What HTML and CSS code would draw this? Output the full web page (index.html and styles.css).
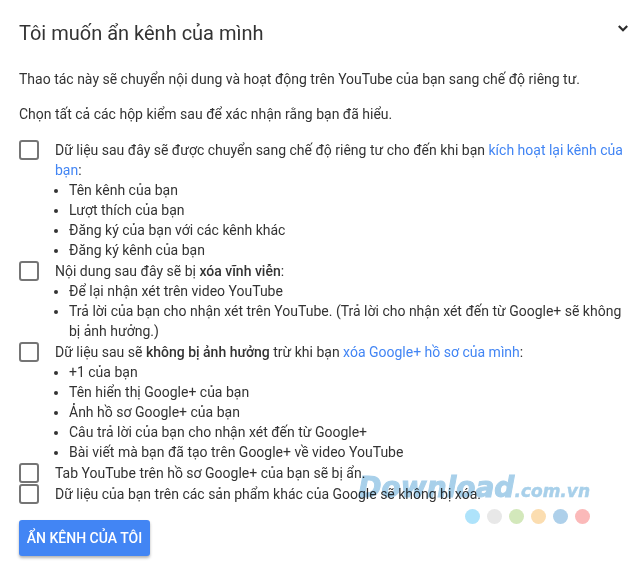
FILE: index.html
```html
<!DOCTYPE html>
<html lang="vi">
<head>
<meta charset="utf-8">
<title>Tôi muốn ẩn kênh của mình</title>
<link rel="stylesheet" href="styles.css">
</head>
<body>
<main class="panel">
  <header class="head">
    <h1 class="title">Tôi muốn ẩn kênh của mình</h1>
    <svg class="chevron" viewBox="0 0 10 7" width="10" height="7"><path d="M.8 1 5 5.2 9.2 1" fill="none" stroke="#2b2b2b" stroke-width="2.2"/></svg>
  </header>
  <p class="para">Thao tác này sẽ chuyển nội dung và hoạt động trên YouTube của bạn sang chế độ riêng tư.</p>
  <p class="para second">Chọn tất cả các hộp kiểm sau để xác nhận rằng bạn đã hiểu.</p>
  <div class="checks">
    <div class="row">
      <span class="box"></span>
      <div class="body">
        <div>Dữ liệu sau đây sẽ được chuyển sang chế độ riêng tư cho đến khi bạn <a class="link">kích hoạt lại kênh của bạn</a>:</div>
        <ul class="list">
          <li>Tên kênh của bạn</li>
          <li>Lượt thích của bạn</li>
          <li>Đăng ký của bạn với các kênh khác</li>
          <li>Đăng ký kênh của bạn</li>
        </ul>
      </div>
    </div>
    <div class="row">
      <span class="box"></span>
      <div class="body">
        <div>Nội dung sau đây sẽ bị <b>xóa vĩnh viễn</b>:</div>
        <ul class="list">
          <li>Để lại nhận xét trên video YouTube</li>
          <li>Trả lời của bạn cho nhận xét trên YouTube. (Trả lời cho nhận xét đến từ Google+ sẽ không bị ảnh hưởng.)</li>
        </ul>
      </div>
    </div>
    <div class="row">
      <span class="box"></span>
      <div class="body">
        <div>Dữ liệu sau sẽ <b>không bị ảnh hưởng</b> trừ khi bạn <a class="link">xóa Google+ hồ sơ của mình</a>:</div>
        <ul class="list">
          <li>+1 của bạn</li>
          <li>Tên hiển thị Google+ của bạn</li>
          <li>Ảnh hồ sơ Google+ của bạn</li>
          <li>Câu trả lời của bạn cho nhận xét đến từ Google+</li>
          <li>Bài viết mà bạn đã tạo trên Google+ về video YouTube</li>
        </ul>
      </div>
    </div>
    <div class="row">
      <span class="box"></span>
      <div class="body">Tab YouTube trên hồ sơ Google+ của bạn sẽ bị ẩn.</div>
    </div>
    <div class="row">
      <span class="box"></span>
      <div class="body">Dữ liệu của bạn trên các sản phẩm khác của Google sẽ không bị xóa.</div>
    </div>
  </div>
  <button class="btn" type="button">ẨN KÊNH CỦA TÔI</button>
</main>
<div class="mark">
  <div class="mark-text"><span class="mark-big">Download</span>.com.vn</div>
  <div class="dots">
    <i class="dot d1"></i><i class="dot d2"></i><i class="dot d3"></i><i class="dot d4"></i><i class="dot d5"></i><i class="dot d6"></i>
  </div>
</div>
</body>
</html>
```
FILE: styles.css
```css
* { box-sizing: border-box; }
html { background: #fff; }
html, body { margin: 0; height: 100%; overflow: hidden; }
body { font: 14px/20px Roboto, "Liberation Sans", sans-serif; color: #333; }
.panel { position: relative; padding: 20px 11px 0 19px; }
.head { display: flex; justify-content: space-between; align-items: flex-start; height: 49px; }
.title { margin: 0; font-size: 20px; font-weight: 400; line-height: 26px; color: #333; }
.chevron { margin-top: 5px; }
.para { margin: 0; }
.second { margin-top: 15px; }
.checks { margin-top: 16px; display: flex; flex-direction: column; }
.row { display: flex; margin-bottom: 1px; }
.box { flex: none; width: 20px; height: 20px; border: 2px solid #757575; border-radius: 3px; }
.body { margin-left: 16px; min-width: 0; }
.list { margin: 0; padding: 0 0 0 14px; }
.link { color: #4285f4; }
b { font-weight: 500; }
.btn { display: block; margin-top: 15px; width: 131px; height: 36px; padding: 0; border: 0; border-radius: 3px; background: #4285f4; color: #fff; font: 500 14px Roboto, sans-serif; box-shadow: 0 2px 3px rgba(0,0,0,.3); }
.mark { position: absolute; left: 350px; top: 472px; width: 240px; color: #a8d0ea; pointer-events: none; mix-blend-mode: multiply; }
.mark-text { height: 32px; font: italic 700 17px/32px "DejaVu Sans", sans-serif; text-align: right; white-space: nowrap; -webkit-text-stroke: .5px #a8d0ea; }
.mark-big { font-size: 28px; -webkit-text-stroke: 1px #a8d0ea; }
.dots { display: flex; gap: 7px; justify-content: flex-end; margin-top: 5px; }
.dot { width: 15px; height: 15px; border-radius: 50%; }
.d1 { background: #aee3fb; }
.d2 { background: #e8e8e8; }
.d3 { background: #d3e8bb; }
.d4 { background: #fbddb0; }
.d5 { background: #aed0ea; }
.d6 { background: #fbb9b9; }
```
